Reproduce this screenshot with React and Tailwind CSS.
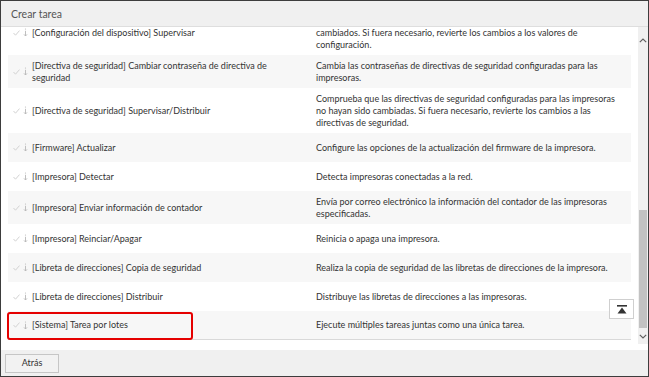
import React from 'react';

const tasks = [
  {
    name: '[Configuración del dispositivo] Supervisar',
    desc: 'Comprueba que los ajustes de los dispositivos configurados no hayan sido cambiados. Si fuera necesario, revierte los cambios a los valores de configuración.',
  },
  {
    name: '[Directiva de seguridad] Cambiar contraseña de directiva de seguridad',
    desc: 'Cambia las contraseñas de directivas de seguridad configuradas para las impresoras.',
  },
  {
    name: '[Directiva de seguridad] Supervisar/Distribuir',
    desc: 'Comprueba que las directivas de seguridad configuradas para las impresoras no hayan sido cambiadas. Si fuera necesario, revierte los cambios a las directivas de seguridad.',
  },
  {
    name: '[Firmware] Actualizar',
    desc: 'Configure las opciones de la actualización del firmware de la impresora.',
  },
  {
    name: '[Impresora] Detectar',
    desc: 'Detecta impresoras conectadas a la red.',
  },
  {
    name: '[Impresora] Enviar información de contador',
    desc: 'Envía por correo electrónico la información del contador de las impresoras especificadas.',
  },
  {
    name: '[Impresora] Reinciar/Apagar',
    desc: 'Reinicia o apaga una impresora.',
  },
  {
    name: '[Libreta de direcciones] Copia de seguridad',
    desc: 'Realiza la copia de seguridad de las libretas de direcciones de la impresora.',
  },
  {
    name: '[Libreta de direcciones] Distribuir',
    desc: 'Distribuye las libretas de direcciones a las impresoras.',
  },
  {
    name: '[Sistema] Tarea por lotes',
    desc: 'Ejecute múltiples tareas juntas como una única tarea.',
    selected: true,
  },
];

function CheckMark() {
  return (
    <svg width="7" height="6" viewBox="0 0 7 6" className="shrink-0">
      <polyline points="0.5,3 2.5,5.2 6.5,0.6" fill="none" stroke="#d2d2d2" strokeWidth="1" />
    </svg>
  );
}

function SortHandle() {
  return (
    <svg width="5" height="9" viewBox="0 0 5 9" className="shrink-0">
      <circle cx="2.5" cy="1" r="0.6" fill="#b8b8b8" />
      <line x1="2.5" y1="2.8" x2="2.5" y2="8" stroke="#b8b8b8" strokeWidth="0.9" />
      <polyline points="1,6.4 2.5,8 4,6.4" fill="none" stroke="#b8b8b8" strokeWidth="0.9" />
    </svg>
  );
}

function Chevron({ up }) {
  return (
    <svg width="8" height="5" viewBox="0 0 8 5">
      <polyline
        points={up ? '0.8,4.2 4,1 7.2,4.2' : '0.8,0.8 4,4 7.2,0.8'}
        fill="none"
        stroke="#606060"
        strokeWidth="1.2"
      />
    </svg>
  );
}

function TaskRow({ task, index }) {
  const shaded = index % 2 === 1;
  return (
    <div
      className={`relative flex items-stretch min-h-[29px] ${shaded ? 'bg-[#f7f7f7]' : 'bg-white'} ${
        index === tasks.length - 1 ? 'border-b border-[#d9d9d9]' : ''
      }`}
    >
      <div className="w-[308px] shrink-0 flex items-center pl-[5px] py-[4.5px]">
        <div className="flex items-center gap-[3px] w-[19px] shrink-0">
          <CheckMark />
          <SortHandle />
        </div>
        <span className="w-[268px]">{task.name}</span>
      </div>
      <div className="flex-1 flex items-center py-[4.5px] pr-[4px]">
        <span>{task.desc}</span>
      </div>
      {task.selected && (
        <div className="absolute top-[1px] bottom-[-1px] left-[-1px] w-[186px] border-2 border-[#e50000] rounded-[3px]" />
      )}
    </div>
  );
}

export default function App() {
  return (
    <div
      className="w-[649px] h-[377px] border border-[#3d3d3d] bg-[#f0f0f0] flex flex-col overflow-hidden text-[#333] text-[9px] leading-[12px]"
      style={{ fontFamily: 'Lato, "Noto Sans", sans-serif' }}
    >
      {/* Header */}
      <div className="h-[26px] shrink-0 flex items-center px-[10px] bg-[#f0f0f0] border-b border-[#dedede] text-[10.5px] text-[#555]">
        Crear tarea
      </div>

      {/* Content */}
      <div className="flex-1 min-h-0 flex bg-white pb-[6px]">
        <div className="relative flex-1 overflow-hidden px-[7px]">
          <div className="-mt-[17px]">
            {tasks.map((t, i) => (
              <TaskRow key={t.name} task={t} index={i} />
            ))}
          </div>
          <button className="absolute right-[4px] bottom-[25px] w-[25px] h-[20px] bg-white border border-[#cfcfcf] flex items-center justify-center">
            <svg width="10" height="9" viewBox="0 0 10 9">
              <rect x="0" y="0" width="10" height="1.6" fill="#333" />
              <polygon points="5,2.6 9.5,8.6 0.5,8.6" fill="#333" />
            </svg>
          </button>
        </div>

        {/* Scrollbar */}
        <div className="w-[10px] shrink-0 bg-[#f0f0f0] flex flex-col">
          <div className="h-[26px] flex items-center justify-center">
            <Chevron up />
          </div>
          <div className="flex-1" />
          <div className="h-[118px] mx-[1px] bg-[#c2c2c2]" />
          <div className="h-[16px] flex items-center justify-center">
            <Chevron />
          </div>
        </div>
      </div>

      {/* Footer */}
      <div className="h-[26px] shrink-0 flex items-center px-[4px] bg-[#f0f0f0]">
        <button className="w-[54px] h-[19px] border border-[#c6c6c6] bg-[#f2f2f2] text-[9px] text-[#333]">
          Atrás
        </button>
      </div>
    </div>
  );
}
